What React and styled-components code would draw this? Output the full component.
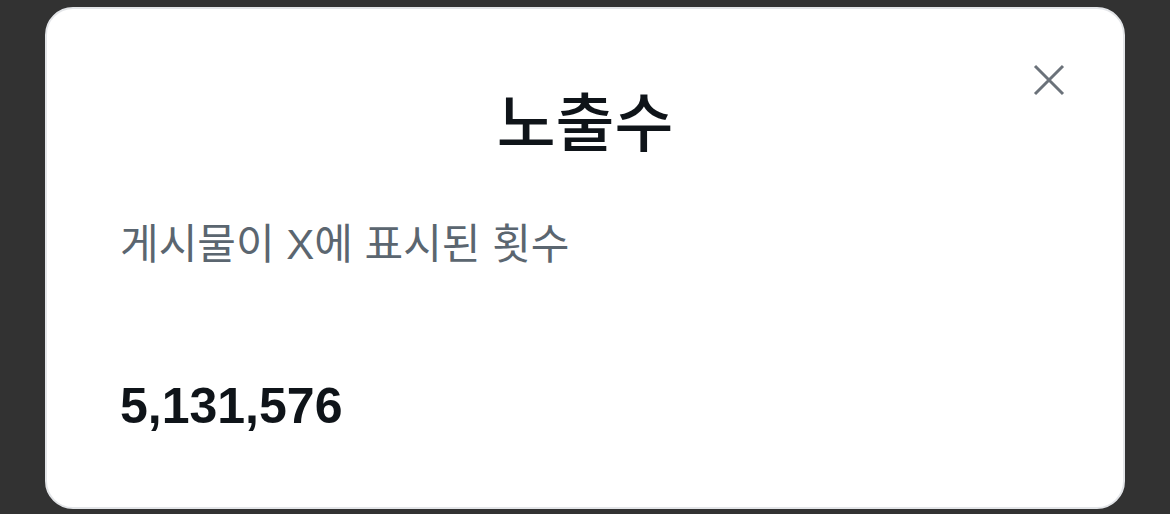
import React from 'react';
import styled, { createGlobalStyle } from 'styled-components';

const GlobalStyle = createGlobalStyle`
  html, body {
    margin: 0;
    padding: 0;
    background: #323232;
  }
  body {
    font-family: "Liberation Sans", "Noto Sans CJK KR", sans-serif;
  }
`;

const Backdrop = styled.div`
  width: 1170px;
  height: 514px;
  box-sizing: border-box;
  padding: 7px 45px 5px 45px;
  display: flex;
  background: #323232;
`;

const Card = styled.div`
  flex: 1;
  box-sizing: border-box;
  background: #ffffff;
  border: 2px solid #e3e5e8;
  border-radius: 28px;
  padding: 49px 52px 0 73px;
  display: flex;
  flex-direction: column;
`;

const Header = styled.div`
  display: grid;
  grid-template-columns: 60px 1fr 60px;
  align-items: start;
`;

const Title = styled.h1`
  grid-column: 2;
  margin: 22px 0 0 0;
  padding-right: 21px;
  text-align: center;
  font-family: "Noto Sans CJK KR", sans-serif;
  font-size: 64px;
  font-weight: 500;
  line-height: 76px;
  color: #0f1419;
`;

const CloseButton = styled.button`
  grid-column: 3;
  justify-self: end;
  width: 44px;
  height: 44px;
  border: none;
  background: transparent;
  padding: 0;
  display: flex;
  align-items: center;
  justify-content: center;
  cursor: pointer;
`;

const Subtitle = styled.p`
  margin: 64px 0 0 0;
  font-family: "Liberation Sans", "Noto Sans CJK KR", sans-serif;
  font-size: 42px;
  line-height: 50px;
  color: #5b6670;
`;

const Count = styled.div`
  margin: 106px 0 0 0;
  font-family: "Liberation Sans", sans-serif;
  font-size: 50px;
  font-weight: 700;
  line-height: 60px;
  color: #0f1419;
`;

function CloseIcon() {
  return (
    <svg width="32" height="32" viewBox="0 0 32 32">
      <path
        d="M2 2 L30 30 M30 2 L2 30"
        stroke="#6b727a"
        strokeWidth="3"
        fill="none"
      />
    </svg>
  );
}

export default function App() {
  return (
    <>
      <GlobalStyle />
      <Backdrop>
        <Card>
          <Header>
            <Title>노출수</Title>
            <CloseButton aria-label="닫기">
              <CloseIcon />
            </CloseButton>
          </Header>
          <Subtitle>게시물이 X에 표시된 횟수</Subtitle>
          <Count>5,131,576</Count>
        </Card>
      </Backdrop>
    </>
  );
}
